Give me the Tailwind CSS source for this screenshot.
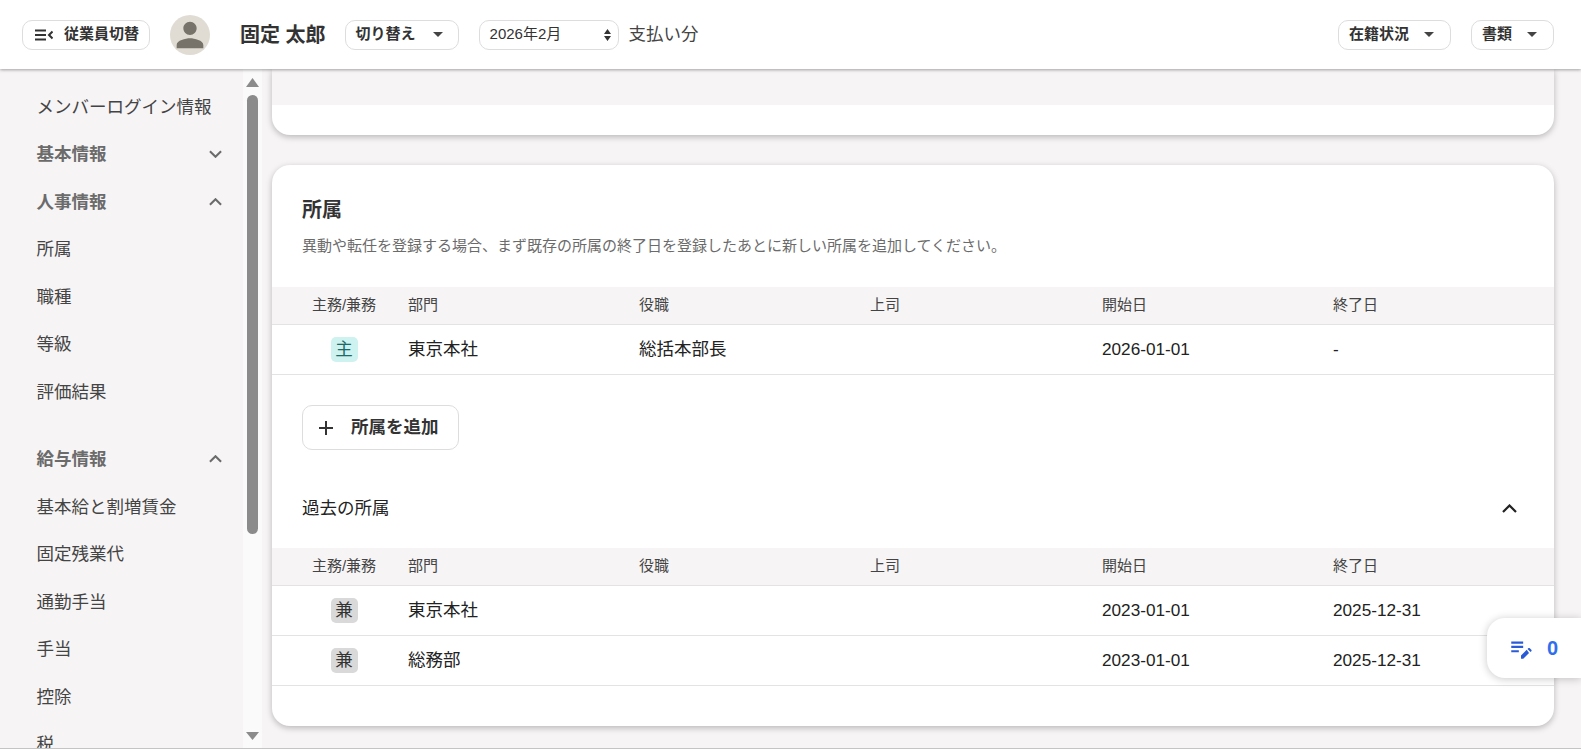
<!DOCTYPE html>
<html lang="ja">
<head>
  <meta charset="UTF-8">
  <title>従業員情報</title>
  <script src="https://cdn.jsdelivr.net/npm/@tailwindcss/browser@4"></script>
</head>
<body class="m-0 font-['Liberation_Sans','Noto_Sans_CJK_JP',sans-serif] text-[#333]">
  <div class="relative flex h-[749px] flex-col overflow-hidden border-b border-[#c4c4c4] bg-[#f6f4f5]">
    <!-- Top bar -->
    <header class="relative z-10 flex h-[69px] shrink-0 items-center bg-white pl-[22px] pr-[27px] shadow-[0_1px_3px_rgba(0,0,0,0.35)]">
      <button class="flex h-[30px] w-[128px] items-center rounded-[10px] border border-[#ddd] pl-3 text-[15px] font-bold">
        <svg class="h-3 w-[18px]" viewBox="0 0 18 12" fill="none" stroke="#333" stroke-width="2"><path d="M0 1.5h11M0 6h11M0 10.500h11M17.500 2.500 14 6l3.500 3.500"/></svg>
        <span class="ml-[11px]">従業員切替</span>
      </button>
      <div class="ml-5 flex h-10 w-10 items-center justify-center overflow-hidden rounded-full bg-[#e0dcd4]">
        <svg class="h-10 w-10 shrink-0" viewBox="0 0 24 24" fill="#77736b"><path d="M12 12c2.210 0 4-1.790 4-4s-1.790-4-4-4-4 1.790-4 4 1.790 4 4 4zm0 2c-2.670 0-8 1.340-8 4v2h16v-2c0-2.660-5.330-4-8-4z"/></svg>
      </div>
      <span class="ml-[30px] text-[20px] font-bold">固定 太郎</span>
      <button class="ml-[19px] flex h-[30px] w-[114px] items-center justify-between rounded-[10px] border border-[#ddd] pl-[10px] pr-[15px] text-[15px] font-bold">
        切り替え
        <svg class="h-[5px] w-[10px]" viewBox="0 0 10 5" fill="#444"><path d="M0 0h10L5 5z"/></svg>
      </button>
      <div class="ml-5 flex h-[30px] w-[140px] items-center justify-between rounded-[10px] border border-[#ddd] pl-[10px] pr-[7px] text-[15px]">
        2026年2月
        <svg class="h-[12px] w-[7px]" viewBox="0 0 7 12" fill="#333"><path d="M3.500 0 7 5H0zM0 7h7l-3.500 5z"/></svg>
      </div>
      <span class="ml-[10px] text-[17.500px] text-[#444]">支払い分</span>
      <button class="ml-auto flex h-[30px] w-[113px] items-center justify-between rounded-[10px] border border-[#ddd] pl-[10px] pr-[16px] text-[15px] font-bold">
        在籍状況
        <svg class="h-[5px] w-[10px]" viewBox="0 0 10 5" fill="#444"><path d="M0 0h10L5 5z"/></svg>
      </button>
      <button class="ml-5 flex h-[30px] w-[83px] items-center justify-between rounded-[10px] border border-[#ddd] pl-[10px] pr-[16px] text-[15px] font-bold">
        書類
        <svg class="h-[5px] w-[10px]" viewBox="0 0 10 5" fill="#444"><path d="M0 0h10L5 5z"/></svg>
      </button>
    </header>

    <div class="flex min-h-0 flex-1">
      <!-- Side navigation -->
      <nav class="w-[243px] shrink-0 overflow-hidden pt-[14px] text-[17.500px] text-[#444]">
        <a class="flex h-[47.500px] items-center pl-[36.500px]">メンバーログイン情報</a>
        <div class="flex h-[47.500px] items-center justify-between pl-[36.500px] pr-[21px] font-bold text-[#6b6b6b]">
          基本情報
          <svg class="h-2 w-[13px]" viewBox="0 0 14 8" fill="none" stroke="#6b6b6b" stroke-width="2.200"><path d="m1 1 6 6 6-6"/></svg>
        </div>
        <div class="flex h-[47.500px] items-center justify-between pl-[36.500px] pr-[21px] font-bold text-[#6b6b6b]">
          人事情報
          <svg class="h-2 w-[13px]" viewBox="0 0 14 8" fill="none" stroke="#6b6b6b" stroke-width="2.200"><path d="m1 7 6-6 6 6"/></svg>
        </div>
        <a class="flex h-[47.500px] items-center pl-[36.500px]">所属</a>
        <a class="flex h-[47.500px] items-center pl-[36.500px]">職種</a>
        <a class="flex h-[47.500px] items-center pl-[36.500px]">等級</a>
        <a class="flex h-[47.500px] items-center pl-[36.500px]">評価結果</a>
        <div class="mt-5 flex h-[47.500px] items-center justify-between pl-[36.500px] pr-[21px] font-bold text-[#6b6b6b]">
          給与情報
          <svg class="h-2 w-[13px]" viewBox="0 0 14 8" fill="none" stroke="#6b6b6b" stroke-width="2.200"><path d="m1 7 6-6 6 6"/></svg>
        </div>
        <a class="flex h-[47.500px] items-center pl-[36.500px]">基本給と割増賃金</a>
        <a class="flex h-[47.500px] items-center pl-[36.500px]">固定残業代</a>
        <a class="flex h-[47.500px] items-center pl-[36.500px]">通勤手当</a>
        <a class="flex h-[47.500px] items-center pl-[36.500px]">手当</a>
        <a class="flex h-[47.500px] items-center pl-[36.500px]">控除</a>
        <a class="flex h-[47.500px] items-center pl-[36.500px]">税</a>
      </nav>

      <!-- Sidebar scrollbar -->
      <div class="flex w-[19px] shrink-0 flex-col items-center bg-[#fafafa] pt-[9px]">
        <svg class="h-[9px] w-[13px]" viewBox="0 0 13 9" fill="#8b8b8b"><path d="M6.500 0 13 9H0z"/></svg>
        <div class="mt-2 h-[439px] w-[11px] rounded-full bg-[#8b8b8b]"></div>
        <svg class="mt-auto mb-2 h-[8px] w-[13px]" viewBox="0 0 13 8" fill="#8b8b8b"><path d="M0 0h13L6.500 8z"/></svg>
      </div>

      <!-- Main content -->
      <main class="min-w-0 flex-1 pl-[10px] pr-[27px]">
        <div class="h-[66px] overflow-hidden rounded-b-[18px] bg-white shadow-[0_2px_6px_rgba(0,0,0,0.25)]">
          <div class="h-[36px] bg-[#f6f4f5]"></div>
        </div>

        <section class="mt-[30px] h-[561px] rounded-[18px] bg-white pt-[32px] shadow-[0_2px_6px_rgba(0,0,0,0.25)]">
          <h2 class="pl-[30px] text-[20px] leading-[26px] font-bold">所属</h2>
          <p class="mt-3 pl-[30px] text-[15px] leading-[22px] text-[#6b6b6b]">異動や転任を登録する場合、まず既存の所属の終了日を登録したあとに新しい所属を追加してください。</p>

          <div class="mt-[30px] grid h-[38px] grid-cols-[136px_231px_231px_232px_231px_1fr] items-center border-b border-[#e3e3e3] bg-[#f6f4f5] text-[15px] text-[#444]">
            <span class="pl-2 text-center">主務/兼務</span><span>部門</span><span>役職</span><span>上司</span><span>開始日</span><span>終了日</span>
          </div>
          <div class="grid h-[50px] grid-cols-[136px_231px_231px_232px_231px_1fr] items-center border-b border-[#e3e3e3] text-[17.500px] text-[#222]">
            <span class="pl-2 text-center"><span class="inline-block h-[25px] w-[27px] rounded-[5px] bg-[#cef2f0] text-center leading-[25px] text-[#1d6a66]">主</span></span>
            <span>東京本社</span><span>総括本部長</span><span></span><span class="text-[17.200px]">2026-01-01</span><span class="text-[17.200px]">-</span>
          </div>

          <button class="mt-[30px] ml-[30px] flex h-[45px] w-[157px] items-center rounded-[10px] border border-[#ddd] pl-[15px] text-[17.500px] font-bold">
            <svg class="h-[16px] w-[16px]" viewBox="0 0 16 16" fill="none" stroke="#333" stroke-width="2"><path d="M8 1v14M1 8h14"/></svg>
            <span class="ml-[17px]">所属を追加</span>
          </button>

          <div class="mt-[35px] flex h-[46px] items-center justify-between pl-[30px] pr-[37px] text-[17.500px] text-[#222]">
            過去の所属
            <svg class="h-[9px] w-[15px]" viewBox="0 0 15 9" fill="none" stroke="#222" stroke-width="2.200"><path d="m1 8 6.500-6.500L14 8"/></svg>
          </div>

          <div class="mt-[17px] grid h-[38px] grid-cols-[136px_231px_231px_232px_231px_1fr] items-center border-b border-[#e3e3e3] bg-[#f6f4f5] text-[15px] text-[#444]">
            <span class="pl-2 text-center">主務/兼務</span><span>部門</span><span>役職</span><span>上司</span><span>開始日</span><span>終了日</span>
          </div>
          <div class="grid h-[50px] grid-cols-[136px_231px_231px_232px_231px_1fr] items-center border-b border-[#e3e3e3] text-[17.500px] text-[#222]">
            <span class="pl-2 text-center"><span class="inline-block h-[25px] w-[27px] rounded-[5px] bg-[#d9d9d9] text-center leading-[25px] text-[#333]">兼</span></span>
            <span>東京本社</span><span></span><span></span><span class="text-[17.200px]">2023-01-01</span><span class="text-[17.200px]">2025-12-31</span>
          </div>
          <div class="grid h-[50px] grid-cols-[136px_231px_231px_232px_231px_1fr] items-center border-b border-[#e3e3e3] text-[17.500px] text-[#222]">
            <span class="pl-2 text-center"><span class="inline-block h-[25px] w-[27px] rounded-[5px] bg-[#d9d9d9] text-center leading-[25px] text-[#333]">兼</span></span>
            <span>総務部</span><span></span><span></span><span class="text-[17.200px]">2023-01-01</span><span class="text-[17.200px]">2025-12-31</span>
          </div>
        </section>
      </main>
    </div>

    <!-- Floating edit counter -->
    <div class="absolute top-[618px] right-0 z-20 flex h-[60px] w-[94px] items-center rounded-l-[18px] bg-white pl-[21px] shadow-[0_1px_8px_rgba(0,0,0,0.22)]">
      <svg class="h-[26px] w-[26px]" viewBox="0 0 24 24" fill="#2a5bd7"><path d="M3 10h11v2H3zM3 6h11v2H3zM3 14h7v2H3zM18 12.900l.7-.7c.4-.4 1-.4 1.400 0l1.400 1.400c.4.4.4 1 0 1.400l-.7.7zM17.300 13.600 12 18.900V22h2.100l5.300-5.300z"/></svg>
      <span class="ml-[13px] text-[20px] font-bold text-[#2f6fed]">0</span>
    </div>
  </div>
</body>
</html>
